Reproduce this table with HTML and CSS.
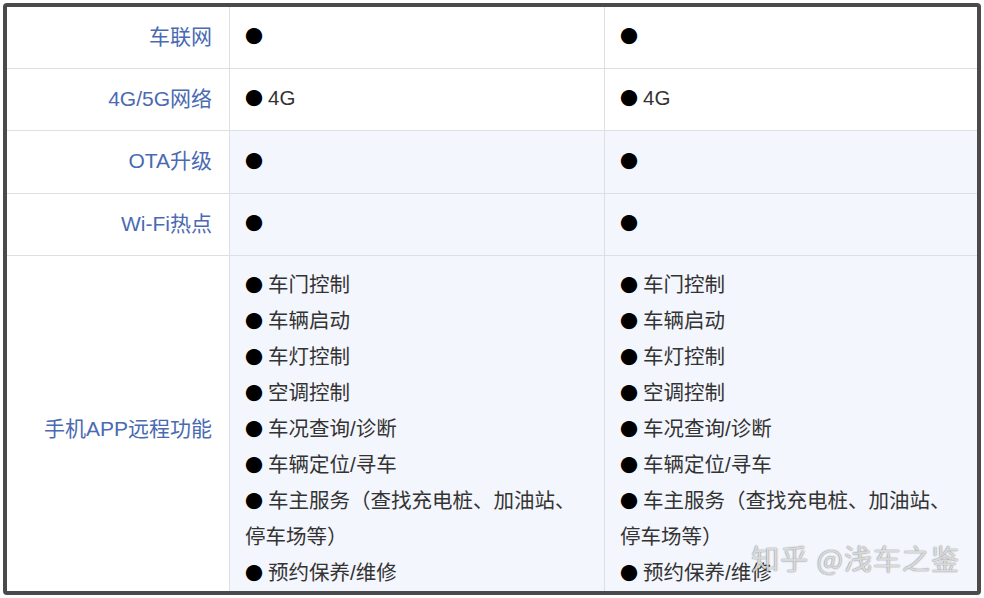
FILE: index.html
```html
<!DOCTYPE html>
<html lang="zh-CN">
<head>
<meta charset="utf-8">
<title>车联网配置对比</title>
<link rel="stylesheet" href="styles.css">
</head>
<body>
<div class="frame">
  <table class="spec">
    <colgroup>
      <col class="c-label">
      <col class="c-a">
      <col class="c-b">
    </colgroup>
    <tbody>
      <tr class="r1">
        <th>车联网</th>
        <td><span class="dot">●</span></td>
        <td><span class="dot">●</span></td>
      </tr>
      <tr class="r2">
        <th>4G/5G网络</th>
        <td><span class="dot">●</span>4G</td>
        <td><span class="dot">●</span>4G</td>
      </tr>
      <tr class="r3 tint">
        <th>OTA升级</th>
        <td><span class="dot">●</span></td>
        <td><span class="dot">●</span></td>
      </tr>
      <tr class="r4 tint">
        <th>Wi-Fi热点</th>
        <td><span class="dot">●</span></td>
        <td><span class="dot">●</span></td>
      </tr>
      <tr class="r5 tint multi">
        <th>手机APP远程功能</th>
        <td>
          <div class="item"><span class="dot">●</span>车门控制</div>
          <div class="item"><span class="dot">●</span>车辆启动</div>
          <div class="item"><span class="dot">●</span>车灯控制</div>
          <div class="item"><span class="dot">●</span>空调控制</div>
          <div class="item"><span class="dot">●</span>车况查询/诊断</div>
          <div class="item"><span class="dot">●</span>车辆定位/寻车</div>
          <div class="item"><span class="dot">●</span>车主服务（查找充电桩、加油站、停车场等）</div>
          <div class="item"><span class="dot">●</span>预约保养/维修</div>
        </td>
        <td>
          <div class="item"><span class="dot">●</span>车门控制</div>
          <div class="item"><span class="dot">●</span>车辆启动</div>
          <div class="item"><span class="dot">●</span>车灯控制</div>
          <div class="item"><span class="dot">●</span>空调控制</div>
          <div class="item"><span class="dot">●</span>车况查询/诊断</div>
          <div class="item"><span class="dot">●</span>车辆定位/寻车</div>
          <div class="item"><span class="dot">●</span>车主服务（查找充电桩、加油站、停车场等）</div>
          <div class="item"><span class="dot">●</span>预约保养/维修</div>
        </td>
      </tr>
    </tbody>
  </table>
  <div class="watermark">知乎 @浅车之鉴</div>
</div>
</body>
</html>
```

FILE: styles.css
```css
html, body {
  margin: 0;
  padding: 0;
  background: #ffffff;
}

body {
  font-family: "Liberation Sans", "Noto Sans CJK SC", sans-serif;
  color: #333333;
}

.frame {
  position: relative;
  box-sizing: border-box;
  margin: 3px;
  width: 978px;
  height: 592px;
  border: 4px solid #4a4a4a;
  border-radius: 4px;
  overflow: hidden;
  background: #ffffff;
}

.spec {
  width: 970px;
  table-layout: fixed;
  border-collapse: separate;
  border-spacing: 0;
  font-size: 20.5px;
  line-height: 24px;
}

.c-label { width: 222px; }
.c-a { width: 375px; }
.c-b { width: 373px; }

.spec th,
.spec td {
  border-bottom: 1px solid #dcdfe4;
  vertical-align: middle;
  padding: 0;
  height: 61px;
  box-sizing: content-box;
}

.spec th {
  font-weight: normal;
  font-size: 21px;
  text-align: right;
  color: #4a6ab3;
  padding-right: 17px;
  padding-bottom: 2px;
  height: 59px;
  background: #ffffff;
}

.spec td {
  border-left: 1px solid #dcdfe4;
  text-align: left;
  padding-left: 15px;
  padding-right: 15px;
  padding-bottom: 3px;
  height: 58px;
  color: #333333;
}

.spec .r3 th {
  height: 60px;
}

.spec .r3 td {
  height: 59px;
}

.tint td {
  background: #f3f6fc;
}

.multi td {
  padding-top: 11px;
  padding-bottom: 10px;
  height: auto;
}

.multi th {
  padding-top: 1px;
  padding-bottom: 0;
  height: auto;
}

.item {
  line-height: 36px;
}

.dot {
  display: inline-block;
  width: 23px;
  line-height: 0;
  color: #000000;
  font-family: "Noto Sans CJK SC", sans-serif;
  font-size: 18px;
}

.watermark {
  position: absolute;
  right: 17px;
  bottom: 19px;
  font-family: "Noto Sans CJK SC", sans-serif;
  font-size: 28px;
  line-height: 28px;
  color: rgba(255, 255, 255, 0.75);
  text-shadow: 0 0 1px rgba(0, 0, 0, 0.55), 0 0 2px rgba(0, 0, 0, 0.2);
  letter-spacing: 1px;
}
```
